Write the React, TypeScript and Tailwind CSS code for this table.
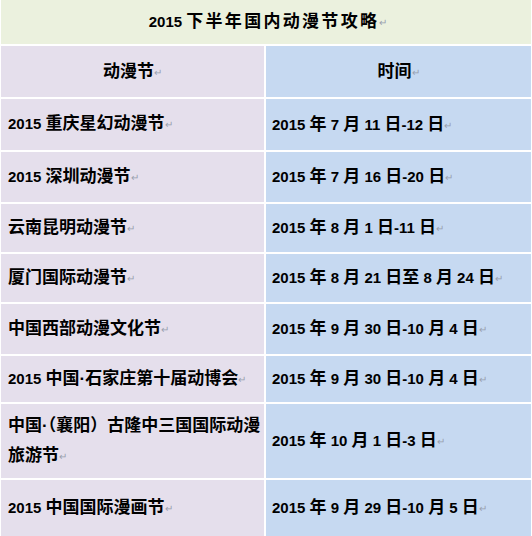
const rows: { name: string[]; date: string; h: string }[] = [
  { name: ["2015 重庆星幻动漫节"], date: "2015 年 7 月 11 日-12 日", h: "h-[51px]" },
  { name: ["2015 深圳动漫节"], date: "2015 年 7 月 16 日-20 日", h: "h-[50px]" },
  { name: ["云南昆明动漫节"], date: "2015 年 8 月 1 日-11 日", h: "h-[48px]" },
  { name: ["厦门国际动漫节"], date: "2015 年 8 月 21 日至 8 月 24 日", h: "h-[48px]" },
  { name: ["中国西部动漫文化节"], date: "2015 年 9 月 30 日-10 月 4 日", h: "h-[50px]" },
  { name: ["2015 中国·石家庄第十届动博会"], date: "2015 年 9 月 30 日-10 月 4 日", h: "h-[46px]" },
  { name: ["中国·（襄阳）古隆中三国国际动漫", "旅游节"], date: "2015 年 10 月 1 日-3 日", h: "h-[74px]" },
  { name: ["2015 中国国际漫画节"], date: "2015 年 9 月 29 日-10 月 5 日", h: "h-[56px]" },
]

// latin runs are set a little smaller, like the narrow digits of the original
function Mixed({ text, cjk = "" }: { text: string; cjk?: string }) {
  const parts = text.split(/([0-9A-Za-z\- ]+)/).filter(Boolean)
  return (
    <>
      {parts.map((p, i) =>
        /^[0-9A-Za-z\- ]+$/.test(p) ? (
          <span key={i} className="text-[15px]">
            {p}
          </span>
        ) : (
          <span key={i} className={cjk}>
            {p}
          </span>
        )
      )}
    </>
  )
}

function Mark() {
  return <span className="text-[10px] font-normal text-gray-400 align-middle">↵</span>
}

export default function App() {
  return (
    <div
      className="w-[532px] h-[536px] bg-white px-[1px] text-black font-bold text-[17px] overflow-hidden"
      style={{ fontFamily: '"Liberation Sans", "Noto Sans CJK SC", sans-serif' }}
    >
      <div className="h-[44px] bg-[#ebf1de] flex items-center justify-center pl-[4px]">
        <span>
          <Mixed text="2015 下半年国内动漫节攻略" cjk="tracking-[2.3px]" />
          <Mark />
        </span>
      </div>
      <div className="grid grid-cols-[263px_265px] gap-[2px] mt-[2px]">
        <div className="h-[51px] bg-[#e5dfec] flex items-center justify-center">
          <span>
            动漫节
            <Mark />
          </span>
        </div>
        <div className="h-[51px] bg-[#c6d9f1] flex items-center justify-center">
          <span>
            时间
            <Mark />
          </span>
        </div>
        {rows.map((r, i) => (
          <div key={i} className="contents">
            <div className={`${r.h} bg-[#e5dfec] flex items-center px-[7px] leading-[30px] whitespace-nowrap`}>
              <span>
                {r.name.map((line, j) => (
                  <span key={j}>
                    {j > 0 && <br />}
                    <Mixed text={line} />
                  </span>
                ))}
                <Mark />
              </span>
            </div>
            <div className={`${r.h} bg-[#c6d9f1] flex items-center pl-[6px] whitespace-nowrap`}>
              <span>
                <Mixed text={r.date} />
                <Mark />
              </span>
            </div>
          </div>
        ))}
      </div>
    </div>
  )
}
